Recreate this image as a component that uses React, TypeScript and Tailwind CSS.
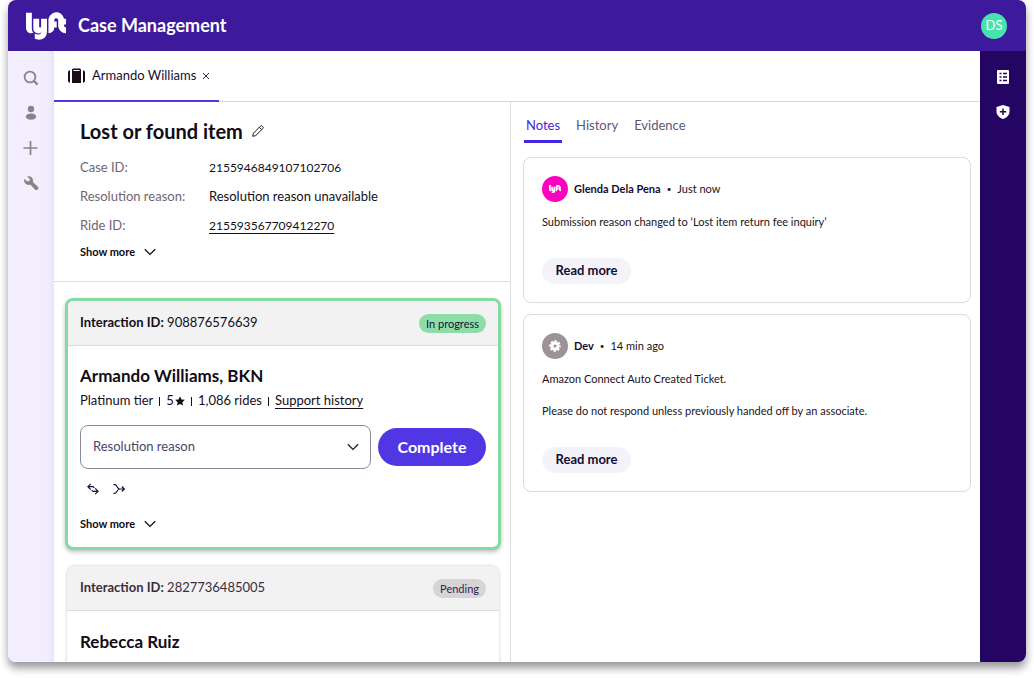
import { useState, type ReactNode } from "react";
import { SiLyft } from "react-icons/si";

const details = [
    { label: "Case ID:", value: "2155946849107102706" },
    { label: "Resolution reason:", value: "Resolution reason unavailable" },
    { label: "Ride ID:", value: "215593567709412270", link: true },
];

const tabs = ["Notes", "History", "Evidence"];

const notes = [
    {
        author: "Glenda Dela Pena",
        time: "Just now",
        lyft: true,
        lines: ["Submission reason changed to ‘Lost item return fee inquiry’"],
    },
    {
        author: "Dev",
        time: "14 min ago",
        lyft: false,
        lines: [
            "Amazon Connect Auto Created Ticket.",
            "Please do not respond unless previously handed off by an associate.",
        ],
    },
];

function ChevronDown() {
    return (
        <svg width="12" height="8" viewBox="0 0 12 8" fill="none" stroke="currentColor" strokeWidth="1.3">
            <path d="M0.8 1.2 6 6.4 11.2 1.2" />
        </svg>
    );
}

function ShowMore() {
    return (
        <button className="flex h-6 items-center gap-[9px] text-[11px] font-bold text-[#110b15]">
            Show more
            <ChevronDown />
        </button>
    );
}

function RailButton({ label, children }: { label: string; children: ReactNode }) {
    return (
        <button aria-label={label} className="flex h-[35px] w-full items-center justify-center">
            {children}
        </button>
    );
}

function LeftRail() {
    return (
        <nav className="w-[46px] shrink-0 bg-linear-to-r from-[#f2eefe] from-85% to-[#e9e4f8] pt-[9px] text-[#8c8286]">
            <RailButton label="Search">
                <svg width="16" height="16" viewBox="0 0 16 16" fill="none" stroke="currentColor" strokeWidth="1.8">
                    <circle cx="7" cy="7" r="5.4" />
                    <path d="m11 11 3.6 3.6" strokeWidth="2.2" />
                </svg>
            </RailButton>
            <RailButton label="Customer">
                <svg width="12" height="16" viewBox="0 0 12 16" fill="currentColor">
                    <circle cx="6" cy="4" r="3.2" />
                    <path d="M6 8.4c3.2 0 5.2 1.4 5.2 3.2S9.4 14.8 6 14.8.8 13.4.8 11.6 2.800 8.400 6 8.400Z" />
                </svg>
            </RailButton>
            <RailButton label="New">
                <svg width="16" height="16" viewBox="0 0 16 16" fill="none" stroke="currentColor" strokeWidth="1.7">
                    <path d="M7.500 1v14M.500 8h14" />
                </svg>
            </RailButton>
            <RailButton label="Tools">
                <svg width="16" height="16" viewBox="0 0 16 16" fill="currentColor">
                    <path d="M5.600 1.300c2.500 0 4.500 2 4.500 4.300 0 .600-.100 1-.300 1.500l5.100 4.700c.700.700.700 1.600.100 2.300l-.600.600c-.600.600-1.600.600-2.200 0L7.300 9.600c-.500.200-1.100.300-1.700.300C3 9.900 1.100 8 1.100 5.600c0-.600.100-1.200.400-1.700l2.900 2.600 2.100-.400.400-2-2.800-2.500c.500-.200 1-.300 1.500-.300Z" />
                </svg>
            </RailButton>
        </nav>
    );
}

function RightRail() {
    return (
        <nav className="w-[46px] shrink-0 bg-[#250564] pt-2 text-white">
            <RailButton label="Case list">
                <svg width="12" height="14" viewBox="0 0 12 14">
                    <rect width="12" height="14" rx="1" fill="currentColor" />
                    <path
                        d="M2.500 3.500h2M6 3.500h4M2.500 7h2M6 7h4M2.500 10.500h2M6 10.500h4"
                        stroke="#250564"
                        strokeWidth="1.3"
                    />
                </svg>
            </RailButton>
            <RailButton label="Safety">
                <svg width="14" height="14" viewBox="0 0 14 14">
                    <path d="M7 0 13.500 2v4.500c0 3.500-2.500 6-6.500 7.500C3 12.500.500 10 .500 6.500V2L7 0Z" fill="currentColor" />
                    <path d="M7 3.500v6.400M3.800 6.700h6.400" stroke="#250564" strokeWidth="1.5" />
                </svg>
            </RailButton>
        </nav>
    );
}

function CaseTabBar() {
    return (
        <div className="flex h-[51px] shrink-0 border-b border-[#d8d7da]">
            <div className="-mb-px flex w-[165px] items-center gap-[7px] border-b-2 border-[#5039e3] pt-px pl-[14px] text-[13px] text-[#150d31]">
                <svg width="17" height="16" viewBox="0 0 17 16" fill="#1b0b16">
                    <path d="M2 2.200v12.600C.700 14.600 0 13.800 0 12.500v-8c0-1.300.700-2.100 2-2.300ZM15 2.200v12.600c1.300-.200 2-1 2-2.300v-8c0-1.300-.700-2.100-2-2.300ZM4 2.200C4 1 4.700.500 5.600.500h5.800c.900 0 1.600.500 1.600 1.700V15H4V2.200Zm1.400-.300v1h6.200v-1H5.400Z" />
                </svg>
                <span className="whitespace-nowrap">Armando Williams</span>
                <button aria-label="Close tab">
                    <svg width="6" height="6" viewBox="0 0 6 6" stroke="currentColor" strokeWidth="0.9">
                        <path d="m0 0 6 6M6 0 0 6" />
                    </svg>
                </button>
            </div>
        </div>
    );
}

function CaseDetails() {
    return (
        <section className="border-b border-[#dedddf] px-[26px] pt-[15px] pb-[17px]">
            <div className="mb-2 flex items-center gap-[9px]">
                <h1 className="text-[20px] leading-7 font-bold text-[#110b15]">Lost or found item</h1>
                <button aria-label="Edit title">
                    <svg width="12" height="12" viewBox="0 0 12 12" fill="none" stroke="#211722">
                        <path d="M.700 11.300 1.400 8.300 8.400 1.200c.600-.600 1.300-.600 1.800-.100l.700.700c.500.500.500 1.200-.100 1.800L3.700 10.600.700 11.300ZM7.300 2.300l2.400 2.400" />
                    </svg>
                </button>
            </div>
            <dl className="text-[13px]">
                {details.map((d) => (
                    <div key={d.label} className="flex h-[29px] items-center">
                        <dt className="w-[129px] shrink-0 text-[#6f6571]">{d.label}</dt>
                        <dd className="whitespace-nowrap text-[#150e1b]">
                            {d.link ? (
                                <a href="#ride" className="text-[12px] underline underline-offset-3">
                                    {d.value}
                                </a>
                            ) : (
                                <span className={/^\d+$/.test(d.value) ? "text-[12px]" : ""}>{d.value}</span>
                            )}
                        </dd>
                    </div>
                ))}
            </dl>
            <ShowMore />
        </section>
    );
}

function ActiveInteraction() {
    return (
        <article className="overflow-hidden rounded-lg border-3 border-[#85d9a2] bg-white shadow-[0_2px_4px_rgba(0,0,0,0.25)]">
            <header className="flex h-[45px] items-center justify-between border-b border-[#dcdcdc] bg-[#f2f2f2] px-3 text-[13px] text-[#150e1b]">
                <p>
                    <strong className="font-bold">Interaction ID:</strong> 908876576639
                </p>
                <span className="rounded-full bg-[#8ddca9] px-[7px] text-[11px] leading-[19px] text-[#0c1637]">
                    In progress
                </span>
            </header>
            <div className="px-3 pt-4 pb-[11px]">
                <h2 className="text-[17px] leading-7 font-bold text-[#110b15]">Armando Williams, BKN</h2>
                <p className="flex h-[22px] items-center gap-[6px] text-[13px] whitespace-nowrap text-[#150e1b]">
                    <span>Platinum tier</span>
                    <span className="h-[9px] w-px bg-[#150e1b]" />
                    <span className="flex items-center gap-px">
                        5
                        <svg width="10" height="10" viewBox="0 0 24 24" fill="currentColor">
                            <path d="m12 .500 3.500 7.600 8.300 1-6.100 5.700 1.600 8.200L12 18.900 4.700 23l1.600-8.200L.200 9.100l8.300-1L12 .500Z" />
                        </svg>
                    </span>
                    <span className="h-[9px] w-px bg-[#150e1b]" />
                    <span>1,086 rides</span>
                    <span className="h-[9px] w-px bg-[#150e1b]" />
                    <a href="#support" className="underline underline-offset-3">
                        Support history
                    </a>
                </p>
                <div className="mt-[13px] flex items-center gap-[7px]">
                    <div className="relative min-w-0 flex-1">
                        <select
                            aria-label="Resolution reason"
                            className="block h-11 w-full appearance-none rounded-lg border border-[#8d8a9d] bg-white px-3 text-[13px] text-[#4b4669]"
                        >
                            <option>Resolution reason</option>
                        </select>
                        <span className="pointer-events-none absolute inset-y-0 right-3 flex items-center text-[#1c1740]">
                            <ChevronDown />
                        </span>
                    </div>
                    <button className="h-[38px] w-[108px] rounded-full bg-[#5037e3] text-[16px] font-bold text-white">
                        Complete
                    </button>
                </div>
                <div className="mt-[10px] flex h-5 items-center gap-[14px] px-[7px] text-[#17133a]">
                    <button aria-label="Transfer">
                        <svg width="12" height="12" viewBox="0 0 12 12" fill="none" stroke="currentColor" strokeWidth="1.2">
                            <path d="M3.800.800.900 3.700l2.900 2.900M1 3.700h4.600c.900 0 1.400.500 1.400 1.400M8.200 5.400l2.900 2.900-2.900 2.900M11 8.300H6.400C5.500 8.300 5 7.800 5 6.900" />
                        </svg>
                    </button>
                    <button aria-label="Merge">
                        <svg width="12" height="12" viewBox="0 0 12 12" fill="none" stroke="currentColor" strokeWidth="1.2">
                            <path d="M.500 1.600h1.300C4 1.600 4.200 6 6.600 6M.500 10.400h1.300C4 10.400 4.200 6 6.600 6M6.200 6h5M8.800 3.500 11.300 6 8.800 8.500" />
                        </svg>
                    </button>
                </div>
                <div className="mt-[13px]">
                    <ShowMore />
                </div>
            </div>
        </article>
    );
}

function PendingInteraction() {
    return (
        <article className="mx-[2px] overflow-hidden rounded-lg bg-white shadow-[0_0_3px_rgba(0,0,0,0.25)]">
            <header className="flex h-[45px] items-center justify-between border-b border-[#dcdcdc] bg-[#f2f2f2] px-[13px] text-[13px] text-[#3a2e3c]">
                <p>
                    <strong className="font-bold">Interaction ID:</strong> 2827736485005
                </p>
                <span className="rounded-full bg-[#d8d3d6] px-[7px] text-[11px] leading-[19px] text-[#2b2650]">
                    Pending
                </span>
            </header>
            <div className="px-[13px] pt-[17px] pb-11">
                <h2 className="text-[17px] leading-7 font-bold text-[#110b15]">Rebecca Ruiz</h2>
            </div>
        </article>
    );
}

function Note({ note }: { note: (typeof notes)[number] }) {
    return (
        <article className="rounded-lg border border-[#dddcda] p-[18px] text-[11px] text-[#1b1220]">
            <header className="flex items-center gap-[6px]">
                {note.lyft ? (
                    <span className="flex size-[26px] items-center justify-center rounded-full bg-[#ff00bf] text-white">
                        <SiLyft size={12} />
                    </span>
                ) : (
                    <span className="flex size-[26px] items-center justify-center rounded-full bg-[#9c9297] text-white">
                        <svg width="12" height="12" viewBox="0 0 12 12">
                            <circle cx="6" cy="6" r="4.5" fill="currentColor" />
                            <circle
                                cx="6"
                                cy="6"
                                r="4.9"
                                fill="none"
                                stroke="currentColor"
                                strokeWidth="1.8"
                                strokeDasharray="2.45 1.4"
                                strokeDashoffset="1.2"
                            />
                            <circle cx="6" cy="6" r="1.6" fill="#9c9297" />
                        </svg>
                    </span>
                )}
                <strong className="font-bold text-[#150d31]">{note.author}</strong>
                <span className="text-[8px]">•</span>
                <time>{note.time}</time>
            </header>
            <div className="mt-3 flex flex-col gap-4 leading-4">
                {note.lines.map((line) => (
                    <p key={line}>{line}</p>
                ))}
            </div>
            <button className="mt-7 h-[26px] w-[89px] rounded-full bg-[#f4f3fa] text-[13px] font-bold text-[#150d31]">
                Read more
            </button>
        </article>
    );
}

function Activity() {
    const [active, setActive] = useState("Notes");

    return (
        <section className="min-w-0 pr-[9px] pl-3">
            <div role="tablist" className="flex gap-3 pl-px text-[13px]">
                {tabs.map((tab) => (
                    <button
                        key={tab}
                        role="tab"
                        aria-selected={tab === active}
                        onClick={() => setActive(tab)}
                        className={`h-[41px] border-b-3 px-[2px] pt-[10px] ${
                            tab === active ? "border-[#4326e0] text-[#4326e0]" : "border-transparent text-[#5d5877]"
                        }`}
                    >
                        {tab}
                    </button>
                ))}
            </div>
            <div className="mt-[14px] flex flex-col gap-[11px]">
                {notes.map((note) => (
                    <Note key={note.author} note={note} />
                ))}
            </div>
        </section>
    );
}

export default function App() {
    return (
        <div className="h-screen overflow-hidden bg-white px-2 pb-4 font-['Lato',sans-serif]">
            <div className="flex h-full flex-col overflow-hidden rounded-[8px] bg-white shadow-[0_6px_9px_rgba(0,0,0,0.4)]">
                {/* Top bar */}
                <header className="flex h-[51px] shrink-0 items-center gap-3 bg-[#3d1a9b] pr-[19px] pl-[18px] text-white">
                    <SiLyft size={40} />
                    <span className="text-[18px] font-bold">Case Management</span>
                    <button
                        aria-label="Account"
                        className="ml-auto size-[26px] rounded-full bg-[#47e3ac] text-[13px] text-white"
                    >
                        DS
                    </button>
                </header>

                <div className="flex min-h-0 flex-1">
                    <LeftRail />
                    <main className="flex min-w-0 flex-1 flex-col">
                        <CaseTabBar />
                        <div className="grid min-h-0 flex-1 grid-cols-[457fr_469fr]">
                            <div className="min-w-0 overflow-hidden border-r border-[#dedddf]">
                                <CaseDetails />
                                <div className="flex flex-col gap-4 pt-4 pr-[9px] pl-[11px]">
                                    <ActiveInteraction />
                                    <PendingInteraction />
                                </div>
                            </div>
                            <Activity />
                        </div>
                    </main>
                    <RightRail />
                </div>
            </div>
        </div>
    );
}
